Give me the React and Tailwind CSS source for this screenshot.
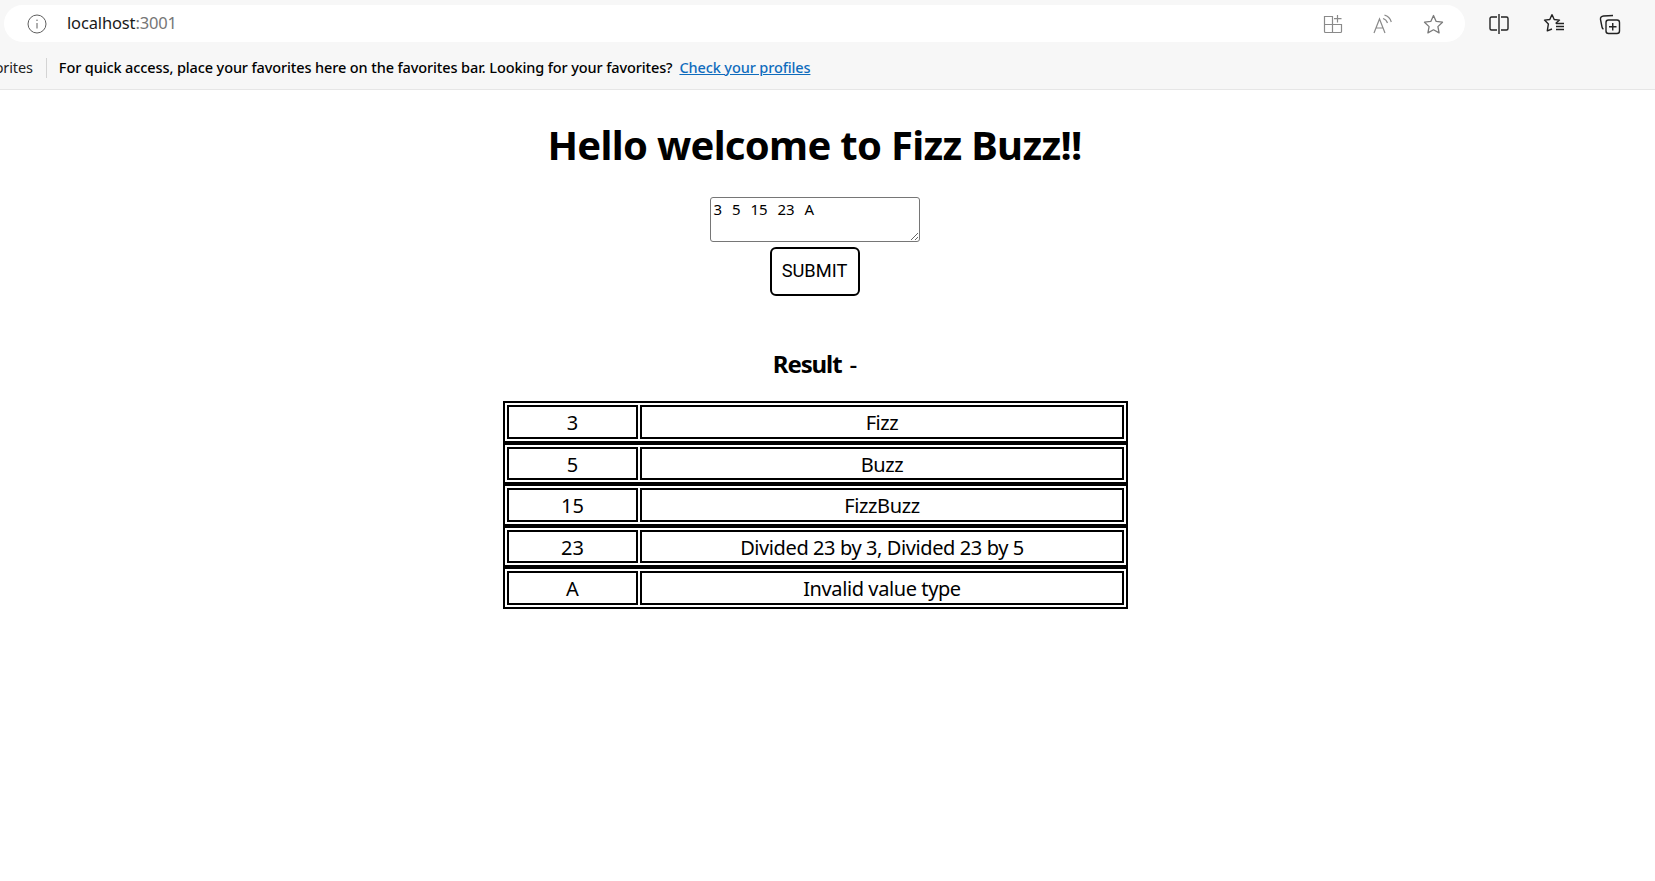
const rows = [
  ["3", "Fizz"],
  ["5", "Buzz"],
  ["15", "FizzBuzz"],
  ["23", "Divided 23 by 3, Divided 23 by 5"],
  ["A", "Invalid value type"],
];

function InfoIcon() {
  return (
    <svg width="20" height="20" viewBox="0 0 20 20" fill="none" stroke="#5f5f5f" strokeWidth="1">
      <circle cx="10" cy="10" r="9" />
      <path d="M10 9v5.500" />
      <circle cx="10" cy="6.200" r="0.700" fill="#5f5f5f" stroke="none" />
    </svg>
  );
}

function AppsIcon() {
  return (
    <svg width="20" height="20" viewBox="0 0 20 20" fill="none" stroke="#8a8a8a" strokeWidth="1.200">
      <path d="M1.500 2.500h8v8h-8zM1.500 10.500h8v8h-7a1 1 0 0 1-1-1zM9.500 10.500h9v7a1 1 0 0 1-1 1h-8z" />
      <path d="M14.500 1v7.500M11 4.700h7.500" />
    </svg>
  );
}

function ReadIcon() {
  return (
    <svg width="20" height="20" viewBox="0 0 20 20" fill="none" stroke="#8a8a8a" strokeWidth="1.200">
      <path d="M1 19l5.500-14 5.500 14M3 14h7" />
      <path d="M10 4.500c2.200 .6 3.800 2.300 4.500 4.500M11.500 1.200c3.200 .8 5.800 3.400 6.800 6.800" />
    </svg>
  );
}

function StarIcon() {
  return (
    <svg width="21" height="20" viewBox="0 0 21 20" fill="none" stroke="#7a7a7a" strokeWidth="1.300" strokeLinejoin="round">
      <path d="M10.500 1.500l2.700 5.900 6.300.8-4.600 4.400 1.200 6.300-5.600-3.100-5.600 3.100 1.200-6.300-4.600-4.400 6.300-.8z" />
    </svg>
  );
}

function SplitIcon() {
  return (
    <svg width="20" height="22" viewBox="0 0 20 22" fill="none" stroke="#222" strokeWidth="1.400">
      <path d="M8 4h-5.500a1.500 1.500 0 0 0-1.500 1.500v10a1.500 1.500 0 0 0 1.500 1.500h5.500M12 4h5.500a1.500 1.500 0 0 1 1.500 1.500v10a1.500 1.500 0 0 1-1.500 1.500h-5.500" />
      <path d="M10 1v20" />
    </svg>
  );
}

function FavoritesIcon() {
  return (
    <svg width="22" height="21" viewBox="0 0 22 21" fill="none" stroke="#222" strokeWidth="1.400" strokeLinejoin="round">
      <path d="M9 1.500l2.200 5 5.300.6-3.900 3.500M9 1.500l-2.200 5-5.300.6 3.900 3.800-1.100 7 4.700-1.900" />
      <path d="M13 10.500h8M13 13.500h8M13 16.500h8" />
    </svg>
  );
}

function CollectionsIcon() {
  return (
    <svg width="22" height="22" viewBox="0 0 22 22" fill="none" stroke="#222" strokeWidth="1.400" strokeLinejoin="round">
      <path d="M14 2.500l-9.500 .5c-2 .2-3.300 1.500-3 3.500l1.500 7.500c.2 1 .6 1.700 1.500 2" />
      <rect x="7" y="7" width="13.500" height="13.500" rx="2.500" />
      <path d="M13.750 10v7.500M10 13.750h7.500" />
    </svg>
  );
}

function ChromeBar() {
  return (
    <div className="h-[90px] bg-[#f7f7f7] border-b border-[#e6e6e6] font-['Noto_Sans',sans-serif]">
      <div className="flex items-center h-[47px]">
        <div className="ml-[4px] w-[1461px] h-[37px] bg-white rounded-full flex items-center pl-[23px] pr-[21px]">
          <InfoIcon />
          <span className="ml-[20px] text-[16.500px] tracking-[-0.15px] text-[#1a1a1a]">
            localhost<span className="text-[#767676]">:3001</span>
          </span>
          <div className="ml-auto flex items-center gap-[30px]">
            <AppsIcon />
            <ReadIcon />
            <StarIcon />
          </div>
        </div>
        <div className="ml-[24px] flex items-center gap-[34px]">
          <SplitIcon />
          <FavoritesIcon />
          <CollectionsIcon />
        </div>
      </div>
      <div className="flex items-center h-[42px] text-[14.500px] tracking-[-0.115px] text-black overflow-hidden">
        <span className="-ml-[28px] text-[#222]">Favorites</span>
        <span className="ml-[13px] w-px h-5 bg-[#d4d4d4]"></span>
        <span className="ml-[12px] font-medium">
          For quick access, place your favorites here on the favorites bar. Looking for your favorites?
        </span>
        <a href="#" className="ml-[7px] font-medium text-[#0f6cbd] underline">
          Check your profiles
        </a>
      </div>
    </div>
  );
}

export default function App() {
  return (
    <div className="min-h-screen bg-white">
      <ChromeBar />
      <div className="w-[1629px] flex flex-col items-center font-['Noto_Sans',sans-serif] text-black">
        <h1 className="mt-[27px] text-[40px] leading-[56px] font-bold tracking-[-0.7px]">Hello welcome to Fizz Buzz!!</h1>
        <textarea
          readOnly
          defaultValue="3 5 15 23 A"
          className="mt-[24px] w-[210px] h-[45px] block border border-[#767676] rounded-[3px] px-[3px] pt-px pb-0 text-[15px] leading-[20px] [word-spacing:6px] outline-none"
        />
        <button className="mt-[5px] w-[90px] h-[49px] pb-[2px] border-2 border-black rounded-[6px] bg-white text-[18.300px] font-['Roboto',sans-serif]">
          SUBMIT
        </button>
        <h3 className="mt-[51px] text-[24px] leading-[33px] font-bold tracking-[-1.100px] [word-spacing:3px]">
          Result <span className="font-medium">-</span>
        </h3>
        <div className="mt-[21px] ml-[2px] w-[625px]">
          {rows.map((row) => (
            <table key={row[0]} className="w-full table-fixed border-2 border-black border-separate border-spacing-[2px] text-[20px] text-center">
              <tbody>
                <tr>
                  <td className="w-[131px] border-2 border-black px-px pt-[2px] pb-0 leading-[27.600px]">{row[0]}</td>
                  <td className="border-2 border-black px-px pt-[2px] pb-0 leading-[27.600px] tracking-[-0.4px]">{row[1]}</td>
                </tr>
              </tbody>
            </table>
          ))}
        </div>
      </div>
    </div>
  );
}
